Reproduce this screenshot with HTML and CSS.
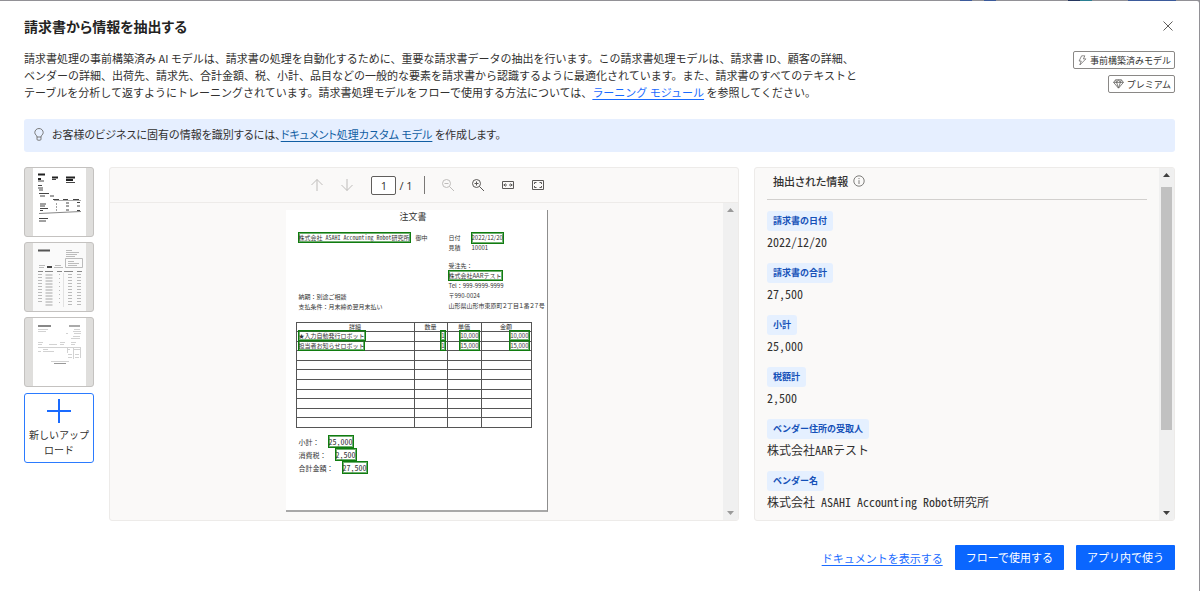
FILE: index.html
```html
<!DOCTYPE html>
<html lang="ja">
<head>
<meta charset="utf-8">
<meta name="viewport" content="width=device-width, initial-scale=1">
<title>請求書から情報を抽出する</title>
<link rel="stylesheet" href="styles.css">
</head>
<body>
<main class="dialog">
  <header class="dialog-head">
    <h1 class="title">請求書から情報を抽出する</h1>
    <button class="close" type="button" aria-label="閉じる">
      <svg width="10" height="10" viewBox="0 0 10 10"><path d="M.5.5l9 9M9.5.5l-9 9"/></svg>
    </button>
  </header>

  <section class="intro">
    <p class="description">請求書処理の事前構築済み AI モデルは、請求書の処理を自動化するために、重要な請求書データの抽出を行います。この請求書処理モデルは、請求書 ID、顧客の詳細、<br>ベンダーの詳細、出荷先、請求先、合計金額、税、小計、品目などの一般的な要素を請求書から認識するように最適化されています。また、請求書のすべてのテキストと<br>テーブルを分析して返すようにトレーニングされています。請求書処理モデルをフローで使用する方法については、<a class="link" href="#">ラーニング モジュール</a> を参照してください。</p>
    <div class="badges">
      <span class="badge"><svg width="9" height="11" viewBox="0 0 10 12"><path d="M4 .8h3.600L6 4.200h2.800L2 11l1.600-4.400H1.200z"/></svg>事前構築済みモデル</span>
      <span class="badge"><svg width="11" height="10" viewBox="0 0 11 10"><path d="M2.600.8h5.800l2 2.600-4.900 5.800L.6 3.400zM.6 3.400h9.800M3.600 3.400l1.900 5.600 1.900-5.600M2.600.8l1 2.600L5.500.8l1.900 2.600 1-2.600"/></svg>プレミアム</span>
    </div>
  </section>

  <section class="tip">
    <svg width="10" height="13" viewBox="0 0 10 13"><path d="M3 9C3 7.200.8 6.800.8 4.600a4.200 4.100 0 0 1 8.400 0C9.200 6.800 7 7.200 7 9zM3 9v2.200q0 1 1 1h2q1 0 1-1V9"/></svg>
    <p>お客様のビジネスに固有の情報を識別するには、<a class="link link-dark" href="#">ドキュメント処理カスタム モデル</a> を作成します。</p>
  </section>

  <section class="workspace">
    <nav class="samples" aria-label="サンプル">
      <button class="thumb" type="button" aria-label="サンプル 1">
        <svg width="68" height="68" viewBox="0 0 68 68">
          <rect x="8" width="53" height="68" fill="#fff"/>
          <g fill="none" stroke="#444">
            <path stroke="#222" stroke-width="2" d="M13 6.500h7M13 11h3M27 9.500h6M41 9.500h9M41 12h7"/>
            <path d="M13 13h6M27 11.500h4M41 14.500h9M13 17.500h4M13 20h5M14 22h4M14 25.500h10M15 28h5M25 28h4M28 31.500h6M38 31.500h5M48 31.500h6M15 36h6M15 38h5M15 40.500h8M15 42.500h3M31 36h1M41 35h3M52 34.500h3M31 39h1M41 38h3M52 38h3M31 42h1M41 42h3M52 42.500h3M14 50.500h9M14 53h7"/>
            <path stroke="#888" d="M14 45.500l42-2"/>
            <path stroke="#aaa" d="M29 32.500h27"/>
          </g>
        </svg>
      </button>
      <button class="thumb" type="button" aria-label="サンプル 2">
        <svg width="68" height="68" viewBox="0 0 68 68">
          <rect x="8" width="53" height="68" fill="#fafafa"/>
          <g fill="none" stroke="#bbb">
            <path stroke="#555" stroke-width="2" d="M13 7.500h12"/>
            <path stroke="#444" stroke-width="2" d="M22 24h5"/>
            <path d="M41 7.500h6M41 9.500h13M41 11.500h11M41 13.500h9M14 22.500h6M14 24.500h5M30 22.500h6M29 24.500h9M43 18.500h6M43 20.500h11M43 22.500h9"/>
            <path d="M40.500 15.500h17v9h-17z"/>
            <path stroke="#888" d="M13 28.500h5M20 28.500h8M32 28.500h5M39 28.500h9M52 28.500h5"/>
            <path stroke-dasharray="1 2" stroke-width="4" d="M15 31v30M54 31v31"/>
            <path stroke-dasharray="2 1" stroke-width="7" d="M24 31v33" stroke="#d0d0d0"/>
            <path stroke-dasharray="1 2" stroke-width="4" d="M45 31v31"/>
            <path stroke-dasharray="1 3" d="M34.500 31v31"/>
            <path stroke="#e2e2e2" d="M38.500 30v34"/>
          </g>
        </svg>
      </button>
      <button class="thumb" type="button" aria-label="サンプル 3">
        <svg width="68" height="68" viewBox="0 0 68 68">
          <rect x="8" width="53" height="68" fill="#fff"/>
          <g fill="none" stroke="#d2d2d2">
            <path stroke="#888" stroke-width="2" d="M13 8h13"/>
            <path stroke="#aaa" stroke-width="2" d="M44 8h11"/>
            <path d="M13 11.500h10M13 13.500h8M49 11.500h6M48 13.500h8M41 15.500h2M49 15.500h7M48 18.500h7M46 20.500h9M13 24.500h5M13 26.500h4M24 26.500h8M35 24.500h5M35 26.500h4M46 24.500h5M46 26.500h4"/>
            <path d="M13 29.500h42M18 31.500h5M18 33.500h11M42 31.500h3M49 31.500h6M42.500 29v6M48.500 29v12M55.500 29v11M13 33.500h3M43 36.500h4M50 36.500h4M43 39.500h4M50 39.500h4M26 43.500h18"/>
            <path stroke="#999" d="M29 45.500h12"/>
          </g>
        </svg>
      </button>
      <button class="upload" type="button">
        <svg width="24" height="24" viewBox="0 0 24 24"><path d="M12 0v24M0 12h24"/></svg>
        <span>新しいアップロード</span>
      </button>
    </nav>

    <section class="viewer">
      <div class="toolbar">
        <button class="tool dim" type="button" aria-label="前のページ"><svg width="14" height="14" viewBox="0 0 14 14"><path d="M7 13V1.500M1.500 7L7 1.500 12.500 7"/></svg></button>
        <button class="tool dim" type="button" aria-label="次のページ"><svg width="14" height="14" viewBox="0 0 14 14"><path d="M7 1v11.500M1.500 7L7 12.500 12.500 7"/></svg></button>
        <label class="pager"><input class="page-input" type="text" value="1" aria-label="ページ">/ 1</label>
        <span class="divider"></span>
        <button class="tool dim" type="button" aria-label="縮小"><svg width="14" height="14" viewBox="0 0 14 14"><circle cx="5.500" cy="5.500" r="4"/><path d="M8.500 8.500L13 13M3.500 5.500h4"/></svg></button>
        <button class="tool" type="button" aria-label="拡大"><svg width="14" height="14" viewBox="0 0 14 14"><circle cx="5.500" cy="5.500" r="4"/><path d="M8.500 8.500L13 13M3.500 5.500h4M5.500 3.500v4"/></svg></button>
        <button class="tool" type="button" aria-label="幅に合わせる"><svg width="14" height="14" viewBox="0 0 14 14"><path d="M1.500 3.500h11v7h-11zM2.500 7H6M8 7h3.500M4.500 5.500L3 7l1.500 1.500M9.500 5.500L11 7 9.500 8.500"/></svg></button>
        <button class="tool" type="button" aria-label="ページに合わせる"><svg width="14" height="14" viewBox="0 0 14 14"><path d="M1.500 2.500h11v9h-11zM3.500 6V4.500h2M8.500 4.500h2V6M10.500 8v1.500h-2M5.500 9.500h-2V8"/></svg></button>
      </div>
      <div class="canvas">
        <div class="stage">
          <article class="sheet">
            <h2 class="sheet-title">注文書</h2>
            <div class="sheet-info">
              <div class="info-left">
                <p><mark class="half">株式会社 ASAHI Accounting Robot研究所</mark>　御中</p>
                <p class="terms">納期：別途ご相談</p>
                <p>支払条件：月末締め翌月末払い</p>
              </div>
              <div class="info-right">
                <p class="pair"><span>日付</span><mark>2022/12/20</mark></p>
                <p class="pair"><span>見積</span><span>10001</span></p>
                <p class="gap-top">受注先：</p>
                <p><mark>株式会社AARテスト</mark></p>
                <p>Tel：999-9999-9999</p>
                <p>〒990-0024</p>
                <p class="address">山形県山形市東原町２丁目１番２７号</p>
              </div>
            </div>
            <table class="items">
              <thead><tr><th class="c-name">詳細</th><th class="c-qty">数量</th><th class="c-unit">単価</th><th>金額</th></tr></thead>
              <tbody>
                <tr><td class="name"><mark>★入力自動発行ロボット</mark></td><td><mark>1</mark></td><td><mark>10,000</mark></td><td><mark>10,000</mark></td></tr>
                <tr><td class="name"><mark>担当者お知らせロボット</mark></td><td><mark>1</mark></td><td><mark>15,000</mark></td><td><mark>15,000</mark></td></tr>
                <tr><td></td><td></td><td></td><td></td></tr>
                <tr><td></td><td></td><td></td><td></td></tr>
                <tr><td></td><td></td><td></td><td></td></tr>
                <tr><td></td><td></td><td></td><td></td></tr>
                <tr><td></td><td></td><td></td><td></td></tr>
                <tr><td></td><td></td><td></td><td></td></tr>
                <tr><td></td><td></td><td></td><td></td></tr>
                <tr><td></td><td></td><td></td><td></td></tr>
              </tbody>
            </table>
            <div class="totals">
              <p>小計：<mark class="half">25,000</mark></p>
              <p>消費税：<mark class="half">2,500</mark></p>
              <p>合計金額：<mark class="half">27,500</mark></p>
            </div>
          </article>
        </div>
        <div class="scrollbar scrollbar-idle">
          <svg width="7" height="4" viewBox="0 0 7 4"><path d="M0 4L3.500 0 7 4z"/></svg>
          <svg width="7" height="4" viewBox="0 0 7 4"><path d="M0 0l3.500 4L7 0z"/></svg>
        </div>
      </div>
    </section>

    <section class="results">
      <div class="results-body">
        <h2 class="results-title">抽出された情報
          <svg width="12" height="12" viewBox="0 0 12 12"><circle cx="6" cy="6" r="5.200"/><path d="M6 5.200V9M6 3v1.100"/></svg>
        </h2>
        <dl class="fields">
          <div class="field"><dt>請求書の日付</dt><dd>2022/12/20</dd></div>
          <div class="field"><dt>請求書の合計</dt><dd>27,500</dd></div>
          <div class="field"><dt>小計</dt><dd>25,000</dd></div>
          <div class="field"><dt>税額計</dt><dd>2,500</dd></div>
          <div class="field"><dt>ベンダー住所の受取人</dt><dd>株式会社AARテスト</dd></div>
          <div class="field"><dt>ベンダー名</dt><dd>株式会社 ASAHI Accounting Robot研究所</dd></div>
        </dl>
      </div>
      <div class="scrollbar">
        <svg width="7" height="4" viewBox="0 0 7 4"><path d="M0 4L3.500 0 7 4z"/></svg>
        <div class="track"><div class="thumb-bar"></div></div>
        <svg width="7" height="4" viewBox="0 0 7 4"><path d="M0 0l3.500 4L7 0z"/></svg>
      </div>
    </section>
  </section>

  <footer class="actions">
    <a class="link" href="#">ドキュメントを表示する</a>
    <button class="primary" type="button">フローで使用する</button>
    <button class="primary" type="button">アプリ内で使う</button>
  </footer>
</main>
</body>
</html>
```
FILE: styles.css
```css
* { box-sizing: border-box; }

body {
  margin: 0;
  min-height: 100vh;
  display: flex;
  padding: 1px 1px 0 0;
  background: linear-gradient(90deg, #929196 80%, #3b5a9b 80%, #3b5a9b 81%, #929196 81%, #929196 82%, #3b5a9b 82%, #3b5a9b 83%, #929196 83%, #929196 89%, #24365f 89%, #24365f 90%, #2a7f92 90%, #2a7f92 91%, #929196 91%, #929196 94%, #3b5a9b 94%, #3b5a9b 98%, #929196 98%);
  color: #323130;
  font-family: "Noto Sans CJK JP", "Noto Sans", sans-serif;
  font-size: 11px;
}

h1, h2, p, dl, dd { margin: 0; }

button {
  padding: 0;
  border: 0;
  background: none;
  color: inherit;
  font: inherit;
}

svg { display: block; flex: none; }

.dialog {
  flex: 1;
  min-width: 0;
  display: flex;
  flex-direction: column;
  padding: 15px 24px 21px;
  border-radius: 0 2px 0 0;
  background: #fff;
}

.dialog-head {
  display: flex;
  align-items: center;
  justify-content: space-between;
  height: 20px;
}

.title {
  font-size: 14px;
  line-height: 20px;
  font-weight: 700;
  font-feature-settings: "palt";
  color: #242322;
}

.close { padding: 2px; }
.close svg { fill: none; stroke: #605e5c; }

.intro {
  display: flex;
  justify-content: space-between;
  gap: 24px;
  margin-top: 14px;
}

.description { line-height: 17px; }

.link {
  color: #1a6bff;
  text-decoration: underline;
  text-underline-offset: 2px;
}

.link-dark { color: #115ea3; }

.badges {
  flex: none;
  display: flex;
  flex-direction: column;
  align-items: flex-end;
  gap: 6px;
  padding-top: 1px;
}

.badge {
  display: flex;
  align-items: center;
  gap: 3px;
  height: 18px;
  padding: 0 3px 0 4px;
  border: 1px solid #8a8886;
  border-radius: 2px;
  font-size: 9px;
  white-space: nowrap;
}

.badge svg { fill: none; stroke: #605e5c; stroke-width: .8; }

.tip {
  display: flex;
  align-items: center;
  gap: 8px;
  height: 33px;
  margin-top: 18px;
  padding: 0 10px 3px;
  border-radius: 3px;
  background: #e6efff;
  font-feature-settings: "palt";
}

.tip svg { fill: none; stroke: #605e5c; stroke-width: .8; }

.workspace {
  flex: 1;
  display: grid;
  grid-template-columns: 70px minmax(0, 630fr) minmax(0, 421fr);
  gap: 15px;
  margin-top: 15px;
}

.samples {
  display: flex;
  flex-direction: column;
  gap: 5px;
}

.thumb {
  width: 70px;
  height: 70px;
  overflow: hidden;
  border: 1px solid #c4c2c0;
  border-radius: 3px;
  background: #dfdedc;
}

.upload {
  display: flex;
  flex-direction: column;
  align-items: center;
  gap: 4px;
  width: 70px;
  height: 70px;
  margin-top: 1px;
  padding: 5px 3px 0;
  border: 1px solid #2b7bff;
  border-radius: 3px;
  font-size: 10px;
  line-height: 15px;
}

.upload svg { fill: none; stroke: #1a6bff; stroke-width: 2; }

.viewer,
.results {
  overflow: hidden;
  border: 1px solid #edebe9;
  border-radius: 3px;
  background: #faf9f8;
}

.viewer {
  display: flex;
  flex-direction: column;
}

.toolbar {
  display: flex;
  align-items: center;
  justify-content: center;
  height: 35px;
  padding-left: 7px;
  border-bottom: 1px solid #edebe9;
  font-family: "Open Sans", sans-serif;
}

.tool {
  display: flex;
  align-items: center;
  justify-content: center;
  width: 30px;
  height: 30px;
}

.tool svg { fill: none; stroke: #5a5856; }
.dim svg { stroke: #bebcba; }

.pager {
  display: flex;
  align-items: center;
  gap: 3px;
  margin-left: 9px;
}

.page-input {
  width: 25px;
  height: 19px;
  padding: 0;
  border: 1px solid #605e5c;
  border-radius: 2px;
  background: #fff;
  color: inherit;
  font: inherit;
  text-align: center;
}

.divider {
  width: 1px;
  height: 18px;
  margin: 0 8px 0 11px;
  background: #7a7876;
}

.canvas {
  flex: 1;
  display: flex;
}

.stage {
  flex: 1;
  display: flex;
  justify-content: center;
  padding: 7px 0 8px;
}

.scrollbar {
  flex: none;
  display: flex;
  flex-direction: column;
  align-items: center;
  width: 15px;
  padding: 5px 0;
  background: #f0f0f0;
}

.scrollbar svg { fill: #404040; }
.scrollbar-idle { justify-content: space-between; }
.scrollbar-idle svg { fill: #9a9a9a; }

.track {
  flex: 1;
  width: 11px;
  margin: 10px 0 9px;
}

.thumb-bar {
  height: 77%;
  background: #c1c1c1;
}

.sheet {
  width: 262px;
  border-right: 1px solid #8d8d8d;
  border-bottom: 2px solid #a8a8a8;
  background: #fff;
  color: #333;
  font-size: 6px;
  line-height: 10px;
  white-space: nowrap;
}

mark {
  background: none;
  color: inherit;
  outline: 1px solid #107c10;
  box-shadow: inset 0 0 0 1px #107c1099;
}

.half { font-feature-settings: "hwid"; }

.sheet-title {
  height: 23px;
  padding-right: 6px;
  text-align: center;
  font-size: 9px;
  line-height: 14px;
  font-weight: 400;
}

.sheet-info {
  display: grid;
  grid-template-columns: 150px 1fr;
  padding-left: 13px;
}

.terms { margin-top: 49px; }
.gap-top { margin-top: 8px; }
.pair { display: grid; grid-template-columns: 23px 1fr; justify-items: start; }
.address { font-feature-settings: "palt"; }

.items {
  width: 236px;
  height: 106px;
  margin: 10px 0 0 10px;
  border-collapse: collapse;
  table-layout: fixed;
  border: 1px solid #222;
  line-height: 6px;
}

.items th,
.items td {
  height: 9px;
  padding: 0 2px;
  border: 1px solid #555;
  font-weight: 400;
  text-align: right;
}

.items th { text-align: center; }
.items .name { text-align: left; }
.c-name { width: 118px; }
.c-qty { width: 33px; }
.c-unit { width: 34px; }

.totals {
  padding: 8px 0 0 13px;
  font-size: 7px;
  line-height: 13px;
}

.totals mark {
  margin-left: 9px;
  font-size: 8px;
  line-height: 8px;
}

.results { display: flex; }

.results-body {
  flex: 1;
  min-width: 0;
  padding: 0 12px;
}

.results-title {
  display: flex;
  align-items: center;
  gap: 5px;
  height: 32px;
  padding: 0 6px 5px;
  border-bottom: 1px solid #d2d0ce;
  font-size: 11px;
  font-weight: 500;
  font-feature-settings: "palt";
}

.results-title svg { fill: none; stroke: #605e5c; stroke-width: .8; }

.fields {
  display: flex;
  flex-direction: column;
  gap: 13px;
  padding-top: 11px;
}

.field {
  display: flex;
  flex-direction: column;
  align-items: flex-start;
  gap: 2px;
}

.field dt {
  padding: 0 6px;
  border-radius: 3px;
  background: #e5f0ff;
  color: #1450b8;
  font-size: 9px;
  line-height: 20px;
  font-weight: 700;
}

.field dd {
  font-size: 12px;
  line-height: 17px;
  font-feature-settings: "hwid";
}

.actions {
  display: flex;
  align-items: center;
  justify-content: flex-end;
  gap: 12px;
  margin-top: 24px;
}

.primary {
  height: 25px;
  padding: 0 11px 1px;
  border-radius: 1px;
  background: #0a66ff;
  color: #fff;
}
```
